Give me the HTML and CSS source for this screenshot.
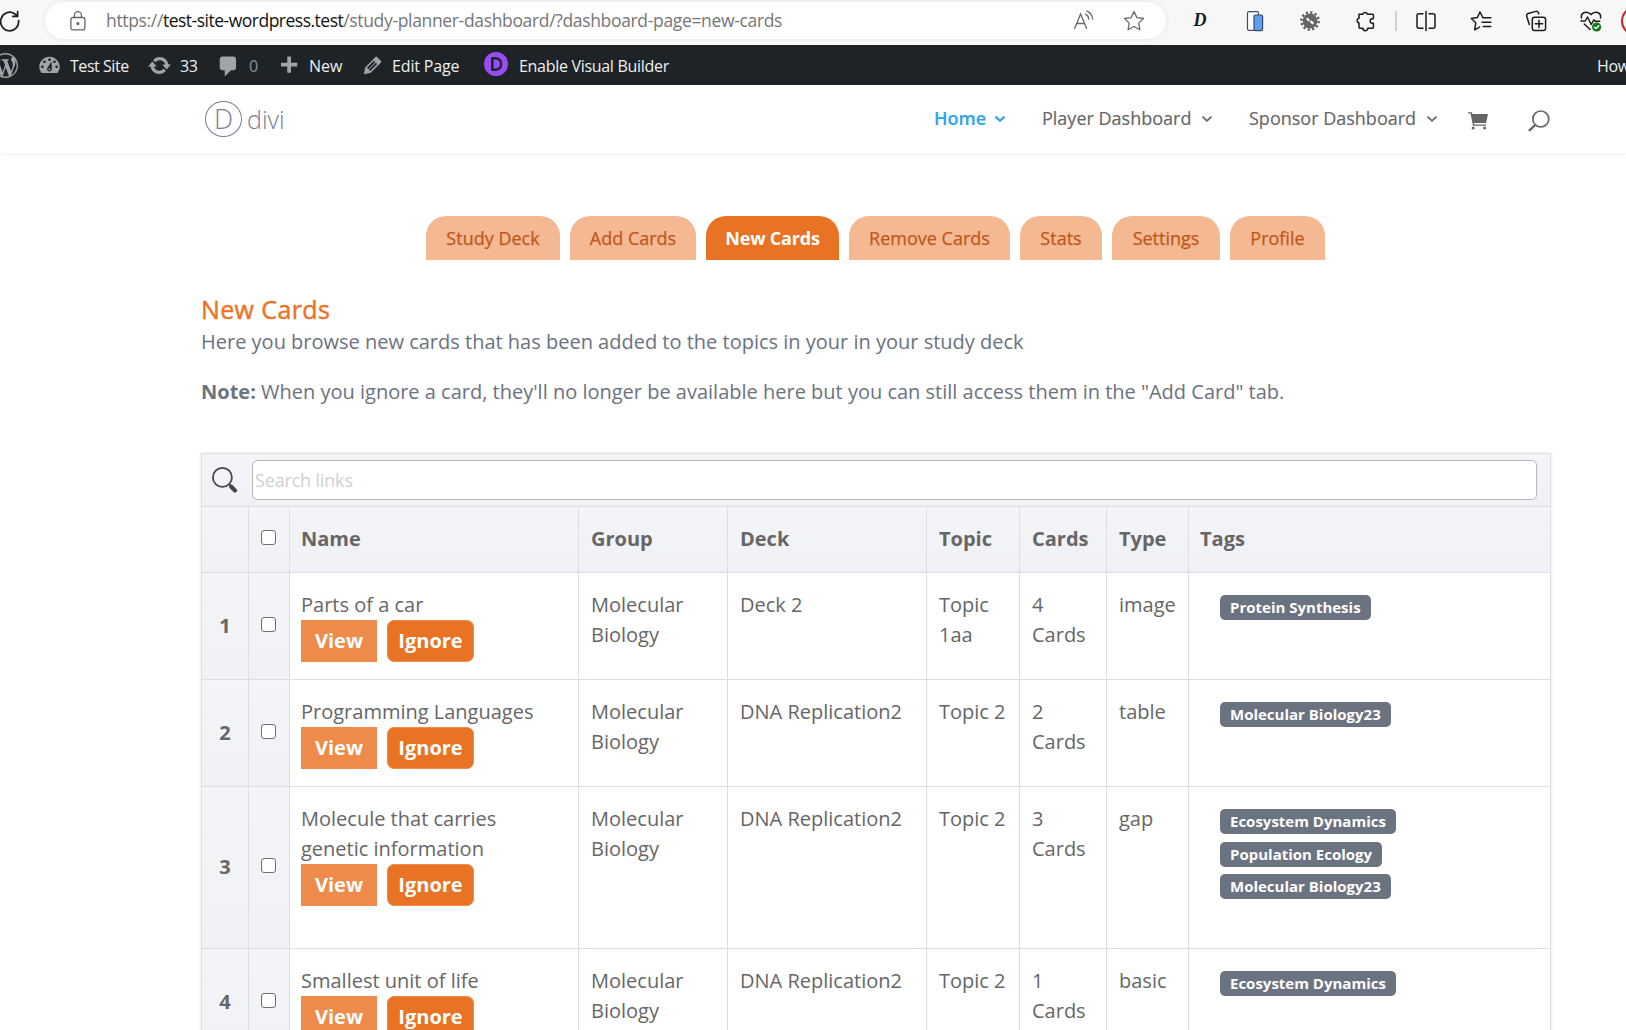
FILE: index.html
```html
<!DOCTYPE html>
<html lang="en">
<head>
<meta charset="utf-8">
<title>New Cards</title>
<link rel="stylesheet" href="styles.css">
</head>
<body>
<div class="browser">
  <svg class="reload" viewBox="0 0 20 22" width="20" height="22" fill="none" stroke="#1b1b1b" stroke-width="1.7" stroke-linecap="round" stroke-linejoin="round"><path d="M18.6 10.5A9 9.3 0 1 1 14.5 3.7L17.6 6.3M17.6 1.5v4.9h-4.8"/></svg>
  <div class="address">
    <svg class="lock" viewBox="0 0 16 20" width="16" height="20" fill="none" stroke="#666" stroke-width="1.3"><rect x=".9" y="6.5" width="14" height="12.3" rx="2"/><path d="M4.4 6.5V4.2a3.5 3.5 0 0 1 7 0v2.3"/><circle cx="7.9" cy="12.6" r=".9" fill="#666"/></svg>
    <span class="url">https://<b>test-site-wordpress.test</b>/study-planner-dashboard/?dashboard-page=new-cards</span>
    <svg class="read" viewBox="0 0 24 24" width="24" height="24" fill="none" stroke="#6a6a6a" stroke-width="1.3" stroke-linecap="round"><path d="M2.6 19.5 8.6 5l6 14.500M4.800 14.500h7.700M13.500 5.200c2 .9 3.100 2.600 3.300 5M14.800 2.200c3.400 1.300 5.500 4 5.900 8"/></svg>
    <svg class="fav" viewBox="0 0 24 24" width="24" height="24" fill="none" stroke="#6a6a6a" stroke-width="1.3" stroke-linejoin="round"><path d="m12 2.600 2.900 6 6.600.9-4.800 4.600 1.200 6.600-5.900-3.200-5.900 3.200 1.200-6.600L2.500 9.500l6.600-.9z"/></svg>
  </div>
  <div class="tools">
    <span class="dtool">D</span>
    <svg viewBox="0 0 24 24" width="24" height="24"><rect x="4.500" y="2.700" width="11" height="18.600" rx="1.500" fill="#fff" stroke="#3c4a66" stroke-width="1.200"/><rect x="11" y="6" width="8.600" height="15.600" rx="1.300" fill="#5a9ff5" stroke="#3c4a66" stroke-width="1.200"/></svg>
    <svg viewBox="0 0 24 24" width="24" height="24"><circle cx="12" cy="12" r="8.600" fill="none" stroke="#666" stroke-width="2.600" stroke-dasharray="2.250 2.250"/><circle cx="12" cy="12" r="7.400" fill="#666"/><path d="m9.400 10 1.300 1.300M13.200 12.800l1.500 1.400" stroke="#f7f7f7" stroke-width="2.300" stroke-linecap="round"/></svg>
    <svg viewBox="0 0 24 24" width="24" height="24" fill="none" stroke="#1b1b1b" stroke-width="1.500" stroke-linejoin="round"><path d="M6 5.200h3.800a2.400 2.400 0 0 1 4.600 0h5a1 1 0 0 1 1 1v3.600h-1a2.250 2.250 0 0 0 0 4.500h1v4a1 1 0 0 1-1 1h-4.700a2.400 2.400 0 0 1-4.800 0H7a1 1 0 0 1-1-1v-4.400a2.400 2.400 0 0 1 0-4.700z"/></svg>
    <i class="divider"></i>
    <svg viewBox="0 0 24 24" width="24" height="24" fill="none" stroke="#1b1b1b" stroke-width="1.500" stroke-linecap="round"><path d="M9 4.700H5a2 2 0 0 0-2 2v10.600a2 2 0 0 0 2 2h4M15 4.700h4a2 2 0 0 1 2 2v10.600a2 2 0 0 1-2 2h-4M12 2.500v19"/></svg>
    <svg viewBox="0 0 24 24" width="24" height="24" fill="none" stroke="#1b1b1b" stroke-width="1.500" stroke-linecap="round" stroke-linejoin="round"><path d="M13.800 8.500 11 3 8.300 8.600l-6 .9 4.500 4.300-1.200 7 5-2.700M13.800 8.800h8M13 13.200h8.800M14.300 17.500h7.500"/></svg>
    <svg viewBox="0 0 24 24" width="24" height="24" fill="none" stroke="#1b1b1b" stroke-width="1.500" stroke-linecap="round" stroke-linejoin="round"><rect x="8.300" y="8.200" width="13.300" height="13.300" rx="2.300"/><path d="M15 11.200v7.300M11.300 14.800h7.300M5.300 15.500 2.700 7.300a2.200 2.200 0 0 1 1.500-2.800l7.500-2.100a2.200 2.200 0 0 1 2.800 1.500l.3 1"/></svg>
    <svg viewBox="0 0 24 24" width="24" height="24" fill="none" stroke="#1b1b1b" stroke-width="1.500" stroke-linecap="round" stroke-linejoin="round"><path d="M2.400 9C1.500 3.500 8 1 12 5.600 16 1 22.500 3.500 21.500 9M1.900 12h4.300l2.300-4 3.700 7.500 2.700-4.700 1.300 1.400h4.600M5.200 15l6 5.500"/><circle cx="17.600" cy="18" r="4.600" fill="#10791a" stroke="none"/><path d="m15.500 18.200 1.500 1.400 2.800-2.800" stroke="#fff" stroke-width="1.400"/></svg>
    <i class="avatar"></i>
  </div>
</div>

<div class="adminbar">
  <svg class="wp" viewBox="0 0 20 20" width="25" height="25" fill="#a0a4a9"><path d="M20 10c0-5.510-4.490-10-10-10C4.480 0 0 4.490 0 10c0 5.520 4.480 10 10 10 5.510 0 10-4.480 10-10zM7.780 15.370L4.370 6.220c.55-.02 1.170-.08 1.170-.08.5-.06.44-1.130-.06-1.110 0 0-1.450.11-2.370.11-.18 0-.37 0-.58-.01C4.120 2.690 6.870 1.110 10 1.110c2.330 0 4.450.87 6.050 2.340-.68-.11-1.650.39-1.650 1.580 0 .74.45 1.360.9 2.100.35.61.55 1.360.55 2.460 0 1.490-1.400 5-1.400 5l-3.030-8.370c.54-.02.82-.17.82-.17.5-.05.44-1.250-.06-1.220 0 0-1.440.12-2.380.12-.87 0-2.330-.12-2.330-.12-.5-.03-.56 1.200-.06 1.220l.92.08 1.260 3.410zM17.410 10c.24-.64.74-1.870.43-4.250.7 1.290 1.050 2.710 1.050 4.250 0 3.290-1.730 6.240-4.400 7.780.97-2.590 1.940-5.200 2.920-7.780zM6.100 18.090C3.120 16.650 1.110 13.530 1.110 10c0-1.300.23-2.480.72-3.590C3.250 10.300 4.670 14.200 6.100 18.090zm4.030-6.630l2.580 6.980c-.86.29-1.760.45-2.710.45-.79 0-1.570-.11-2.290-.33.81-2.380 1.620-4.740 2.420-7.100z"/></svg>
  <svg class="dash" viewBox="0 0 20 20" width="25" height="25"><path fill="#a0a4a9" d="M3.760 16h12.480c1.100-1.370 1.960-3.110 1.960-5 0-4.420-3.780-8-8.200-8s-8.200 3.580-8.200 8c0 1.890.86 3.630 1.960 5z"/><g fill="#1d2327"><circle cx="10" cy="5.300" r="1.050"/><circle cx="6" cy="7" r="1.050"/><circle cx="14" cy="7" r="1.050"/><circle cx="4.300" cy="11" r="1.050"/><circle cx="15.700" cy="11" r="1.050"/><path d="M11.600 6.500 11.900 13a1.900 1.900 0 1 1-3.600-.9z"/></g><circle cx="10" cy="12.900" r=".8" fill="#a0a4a9"/></svg>
  <span class="t-site">Test Site</span>
  <svg class="upd" viewBox="0 0 20 20" width="25" height="25" fill="#a0a4a9"><path d="M10.200 3.280c3.530 0 6.430 2.610 6.920 6h2.080l-3.500 4-3.500-4h2.320c-.45-1.970-2.210-3.450-4.320-3.450-1.450 0-2.730.71-3.540 1.780L4.950 5.660C6.230 4.200 8.110 3.280 10.200 3.280zm-.4 13.440c-3.520 0-6.430-2.610-6.920-6H.8l3.500-4 3.500 4H5.480c.45 1.970 2.210 3.450 4.320 3.450 1.450 0 2.730-.71 3.540-1.780l1.710 1.950c-1.280 1.460-3.150 2.380-5.250 2.380z"/></svg>
  <span class="t-upd">33</span>
  <svg class="com" viewBox="0 0 20 20" width="25" height="25" fill="#a0a4a9"><path d="M5 2h9c1.100 0 2 .9 2 2v7c0 1.100-.9 2-2 2h-2l-5 5v-5H5c-1.100 0-2-.9-2-2V4c0-1.100.9-2 2-2z"/></svg>
  <span class="t-com">0</span>
  <svg class="plus" viewBox="0 0 20 20" width="25" height="25" fill="#a0a4a9"><path d="M17 7v3h-5v5H9v-5H4V7h5V2h3v5h5z"/></svg>
  <span class="t-new">New</span>
  <svg class="pen" viewBox="0 0 20 20" width="25" height="25" fill="#a0a4a9"><path d="M13.890 3.390l2.710 2.720c.46.46.42 1.240.03 1.640l-8.010 8.020-5.560 1.160 1.160-5.580s7.600-7.630 7.990-8.030c.39-.39 1.220-.39 1.680.07zm-2.730 2.790l-5.590 5.610 1.110 1.110 5.540-5.650zm-2.970 8.230l5.580-5.600-1.070-1.080-5.590 5.600z"/></svg>
  <span class="t-edit">Edit Page</span>
  <svg class="vb" viewBox="0 0 24 24" width="24" height="24"><circle cx="12" cy="12" r="12" fill="#974df3"/><path d="M8.300 6.200h3.200c3.400 0 5.600 2.300 5.600 5.800s-2.200 5.800-5.600 5.800H8.300z" fill="none" stroke="#1d2327" stroke-width="2.400" stroke-linejoin="round"/></svg>
  <span class="t-vb">Enable Visual Builder</span>
  <span class="t-how">Howdy</span>
</div>

<header class="site">
  <div class="logo"><span class="mark">D</span><span class="word">divi</span></div>
  <nav class="menu">
    <a class="m1">Home</a><svg class="chev on" viewBox="0 0 10 6" width="10" height="6"><path d="m.5.600 4.500 4.200L9.500.600"/></svg>
    <a class="m2">Player Dashboard</a><svg class="chev" viewBox="0 0 10 6" width="10" height="6"><path d="m.5.600 4.500 4.200L9.500.600"/></svg>
    <a class="m3">Sponsor Dashboard</a><svg class="chev" viewBox="0 0 10 6" width="10" height="6"><path d="m.5.600 4.500 4.200L9.500.600"/></svg>
    <svg class="cart" viewBox="0 0 20 18" width="20" height="18"><path d="M0 .2h3.800l.7 1.900H20l-1.900 9H5.900l.3 1.300h11.900v1.400H5L2.500 1.600H0z" fill="#666"/><circle cx="5.100" cy="16.100" r="1.500" fill="#666"/><circle cx="16.700" cy="16.100" r="1.500" fill="#666"/></svg>
    <svg class="find" viewBox="0 0 22 22" width="22" height="22" fill="none" stroke="#666"><circle cx="12.800" cy="9" r="8" stroke-width="1.700"/><path d="M7.300 14.900.9 20.900" stroke-width="2.300"/></svg>
  </nav>
</header>

<main>
  <div class="tabs">
    <a class="w1">Study Deck</a><a class="w2">Add Cards</a><a class="w3 active">New Cards</a><a class="w4">Remove Cards</a><a class="w5">Stats</a><a class="w6">Settings</a><a class="w7">Profile</a>
  </div>
  <h1>New Cards</h1>
  <p class="intro">Here you browse new cards that has been added to the topics in your in your study deck</p>
  <p class="note"><b>Note:</b> When you ignore a card, they'll no longer be available here but you can still access them in the "Add Card" tab.</p>

  <table>
    <colgroup><col class="c1"><col class="c2"><col class="c3"><col class="c4"><col class="c5"><col class="c6"><col class="c7"><col class="c8"><col class="c9"></colgroup>
    <thead>
      <tr class="search"><th colspan="9"><div class="searchbar"><svg viewBox="0 0 26 26" width="26" height="26" fill="none" stroke="#454545"><circle cx="10.400" cy="10.400" r="9.500" stroke-width="1.800"/><path d="m17.500 17.500 1.500 1.500" stroke-width="1.800"/><path d="m19.300 19.800 3.700 3.600" stroke-width="4.200" stroke-linecap="round"/></svg><input type="text" placeholder="Search links"></div></th></tr>
      <tr class="head"><th></th><th class="chk"><i></i></th><th class="name">Name</th><th>Group</th><th>Deck</th><th>Topic</th><th>Cards</th><th>Type</th><th class="name">Tags</th></tr>
    </thead>
    <tbody>
      <tr><th class="num">1</th><th class="chk"><i></i></th><td class="name">Parts of a car<div class="acts"><a class="view">View</a><a class="ignore">Ignore</a></div></td><td>Molecular Biology</td><td>Deck 2</td><td>Topic 1aa</td><td>4 Cards</td><td>image</td><td class="tags"><span>Protein Synthesis</span></td></tr>
      <tr><th class="num">2</th><th class="chk"><i></i></th><td class="name">Programming Languages<div class="acts"><a class="view">View</a><a class="ignore">Ignore</a></div></td><td>Molecular Biology</td><td>DNA Replication2</td><td>Topic 2</td><td>2 Cards</td><td>table</td><td class="tags"><span>Molecular Biology23</span></td></tr>
      <tr class="tall"><th class="num">3</th><th class="chk"><i></i></th><td class="name">Molecule that carries<br>genetic information<div class="acts"><a class="view">View</a><a class="ignore">Ignore</a></div></td><td>Molecular Biology</td><td>DNA Replication2</td><td>Topic 2</td><td>3 Cards</td><td>gap</td><td class="tags"><span>Ecosystem Dynamics</span><span>Population Ecology</span><span>Molecular Biology23</span></td></tr>
      <tr><th class="num">4</th><th class="chk"><i></i></th><td class="name">Smallest unit of life<div class="acts"><a class="view">View</a><a class="ignore">Ignore</a></div></td><td>Molecular Biology</td><td>DNA Replication2</td><td>Topic 2</td><td>1 Cards</td><td>basic</td><td class="tags"><span>Ecosystem Dynamics</span></td></tr>
    </tbody>
  </table>
</main>
</body>
</html>
```

FILE: styles.css
```css
* { box-sizing: border-box; }
html, body { margin: 0; height: 1030px; overflow: hidden; }
body { background: #fff; color: #666; font-family: "Open Sans", sans-serif; }
svg { display: block; flex: none; }
span, a { white-space: nowrap; }

/* browser toolbar */
.browser { display: flex; height: 45px; background: #f7f7f7; overflow: hidden; }
.reload { margin-top: 10px; }
.address { display: flex; align-items: center; width: 1121px; height: 37px; margin: 2px 0 0 25px; border-radius: 19px; background: #fff; box-shadow: 0 0 4px #e4e4e4; flex: none; }
.lock { margin-left: 25px; }
.url { width: 944px; margin-left: 20px; font-size: 17.5px; line-height: 37px; color: #767676; letter-spacing: -.34px; }
.url b { font-weight: 400; color: #111; letter-spacing: -.5px; }
.read { margin-left: 22px; }
.fav { margin-left: 26px; }
.tools { display: flex; align-items: center; height: 41px; margin-left: 22px; gap: 31px; flex: none; }
.dtool { width: 24px; text-align: center; font: italic 700 18px "Liberation Serif", serif; color: #1b1b1b; }
.divider { width: 2px; height: 20px; margin: 0 -14px 0 -13px; background: #cfcfcf; }
.avatar { width: 30px; height: 30px; margin-left: -13px; border: 2px solid #c5262c; border-radius: 50%; }

/* WordPress admin bar */
.adminbar { display: flex; height: 40px; background: #1d2327; color: #f0f0f1; font-size: 16px; line-height: 42px; letter-spacing: -.3px; overflow: hidden; }
.adminbar span { flex: none; }
.wp { margin: 8px 0 0 -7px; }
.dash { margin: 8px 0 0 19px; }
.t-site { width: 77px; margin-left: 8px; letter-spacing: -.45px; }
.upd { margin-top: 8px; }
.t-upd { width: 36px; margin-left: 8px; letter-spacing: -.3px; }
.com { margin-top: 9px; }
.t-com { width: 27px; margin-left: 8px; color: #8c8f94; }
.plus { margin-top: 9px; }
.t-new { width: 51px; margin-left: 8px; letter-spacing: 0; }
.pen { margin-top: 8px; }
.t-edit { width: 92px; margin-left: 7px; letter-spacing: -.15px; }
.vb { margin-top: 7px; }
.t-vb { width: 1078px; margin-left: 11px; }

/* site header */
.site { display: flex; justify-content: space-between; height: 68px; box-shadow: 0 1px 5px rgba(0,0,0,.08); background: #fff; }
.logo { display: flex; margin: 16px 0 0 205px; color: #7c7f92; font-weight: 300; }
.mark { width: 37px; height: 36px; border: 1.300px solid #7c7f92; border-radius: 50%; text-align: center; font-size: 27px; line-height: 34px; }
.word { margin-left: 5px; font-size: 25px; line-height: 37px; }
.menu { display: flex; align-items: center; width: 692px; height: 68px; font-size: 18px; -webkit-text-stroke: .15px; }
.menu a { flex: none; line-height: 66px; height: 68px; }
.m1 { width: 61px; color: #2ea3f2; font-weight: 600; }
.m2 { width: 160px; margin-left: 37px; }
.m3 { width: 178px; margin-left: 37px; }
.chev { fill: none; stroke: #666; stroke-width: 1.800px; overflow: visible; }
.chev.on { stroke: #2ea3f2; stroke-width: 2.200px; }
.cart { margin: 3px 0 0 31px; }
.find { margin: 3px 0 0 40px; }

/* page */
main { padding: 63px 0 0 201px; }
.tabs { display: flex; gap: 10px; margin-left: 225px; }
.tabs a { height: 44px; border-radius: 20px 20px 0 0; background: #f4b892; color: #c2571a; text-align: center; font-size: 18px; line-height: 44px; -webkit-text-stroke: .25px; }
.tabs .active { background: #e97324; color: #fff; font-weight: 700; letter-spacing: -.2px; -webkit-text-stroke: 0; }
.w1 { width: 134px; } .w2 { width: 126px; } .w3 { width: 133px; } .w4 { width: 161px; } .w5 { width: 82px; } .w6 { width: 108px; } .w7 { width: 95px; }
h1 { margin: 31px 0 0; font-size: 25px; line-height: 36px; font-weight: 400; color: #ed7326; letter-spacing: .38px; -webkit-text-stroke: .45px; }
p { margin: 0; font-size: 20px; line-height: 30px; color: #6b7280; white-space: nowrap; }
.note { margin-top: 20px; }

table { width: 1350px; margin-top: 46px; border-collapse: separate; border-spacing: 0; table-layout: fixed; border-left: 1px solid #dcdee5; border-top: 1px solid #dcdee5; box-shadow: 0 1px 4px rgba(0,0,0,.1); font-size: 20px; line-height: 30px; }
.c1 { width: 47px; } .c2 { width: 41px; } .c3 { width: 289px; } .c4 { width: 149px; } .c5 { width: 199px; } .c6 { width: 93px; } .c7 { width: 87px; } .c8 { width: 82px; } .c9 { width: 362px; }
th, td { padding: 17px 11px 0 12px; border-right: 1px solid #dcdee5; border-bottom: 1px solid #dcdee5; text-align: left; vertical-align: top; }
td { background: #fff; }
th { background: linear-gradient(#f4f5f9, #f0f1f5); font-weight: 700; }
.name { padding-left: 11px; }
tbody tr { height: 107px; }
tbody tr.tall { height: 162px; }
.head { height: 66px; }
.search { height: 53px; }
.search th { padding: 0; }
.num { padding: 0 0 1px; text-align: center; vertical-align: middle; }
.chk { padding: 0 0 4px 12px; vertical-align: middle; }
.chk i { display: block; width: 15px; height: 15px; border: 1px solid #6f6f6f; border-radius: 3px; background: #fff; }
.searchbar { display: flex; align-items: center; height: 52px; padding-left: 10px; }
.searchbar input { width: 1285px; height: 40px; margin-left: 14px; padding: 0 2px; border: 1px solid #b5b7b8; border-radius: 5px; background: #fff; font: 18px "Open Sans", sans-serif; letter-spacing: -.17px; }
.searchbar input::placeholder { color: #d0d0d0; opacity: 1; }
.acts { display: flex; gap: 10px; height: 42px; color: #fff; font-weight: 700; text-align: center; line-height: 41px; }
.view { width: 76px; background: #ee8b4b; }
.ignore { width: 87px; border: 1px solid #ee8b4b; border-radius: 7px; background: #e97324; line-height: 39px; }
.tags { padding: 22px 0 0 31px; }
.tags span { display: block; width: fit-content; height: 25px; margin-bottom: 7.500px; padding: 0 10px; border-radius: 5px; background: #6b7280; color: #fff; font-size: 15px; font-weight: 700; line-height: 25px; }
```
